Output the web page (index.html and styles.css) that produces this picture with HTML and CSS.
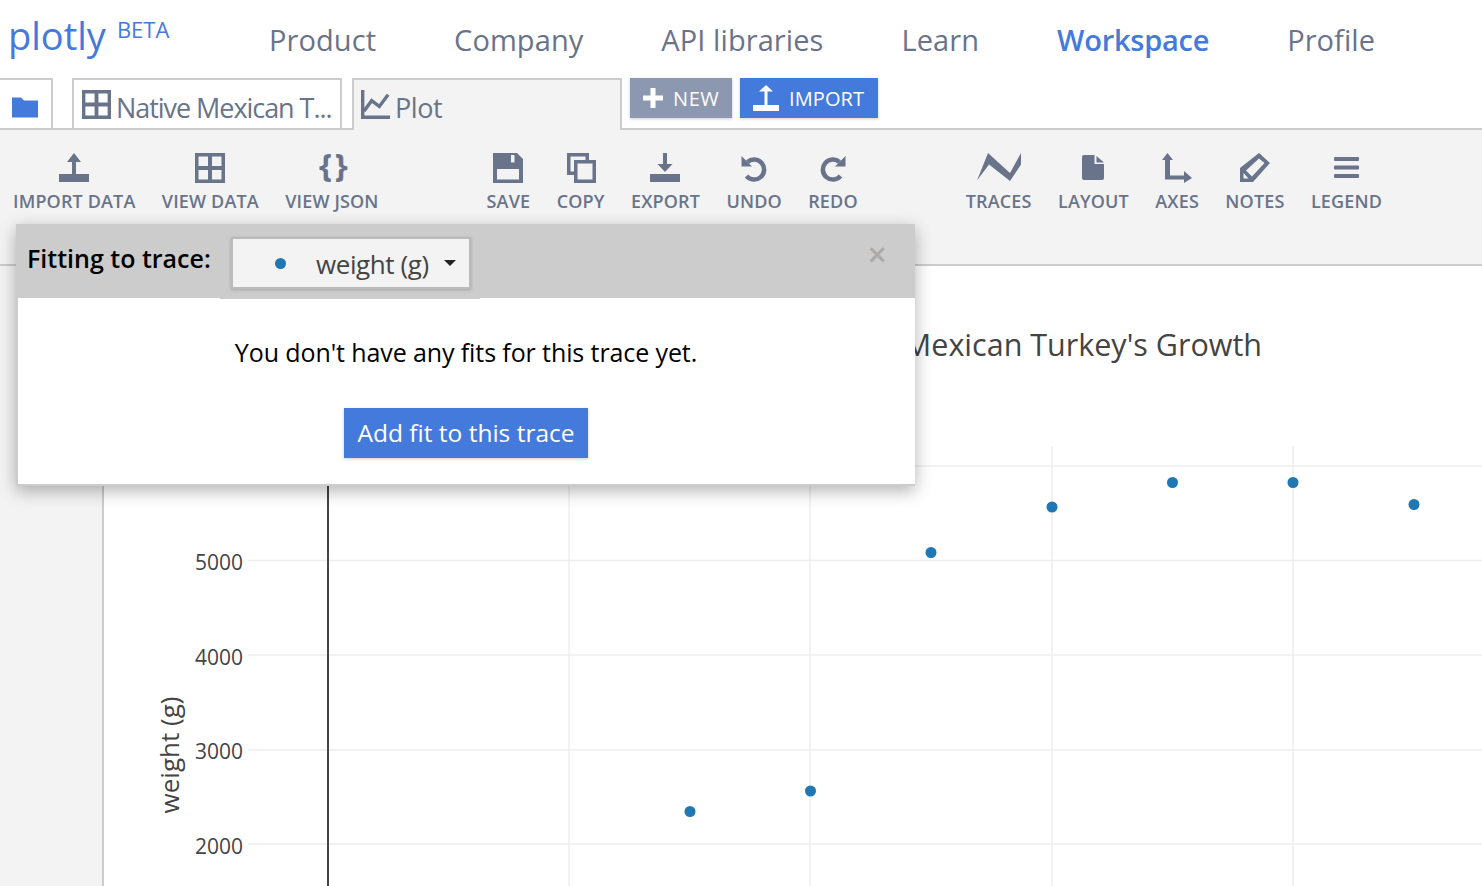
FILE: index.html
```html
<!DOCTYPE html>
<html lang="en">
<head>
<meta charset="utf-8">
<title>Plotly Workspace</title>
<link rel="stylesheet" href="styles.css">
</head>
<body>
<svg class="sprite" aria-hidden="true">
  <symbol id="i-import" viewBox="0 0 30 30"><path d="M0 21h30v8H0zM13 21V9H8L15 0l7 9h-5v12z"/></symbol>
  <symbol id="i-upload" viewBox="0 0 26 26"><path d="M0 20h26v6H0zM11.500 20V6.500H6L13 0l7 6.500h-5.500V20z"/></symbol>
  <symbol id="i-grid" viewBox="0 0 30 30"><path fill-rule="evenodd" d="M0 0h30v30H0zM3.500 3.500v9.500h9.500V3.500zM17 3.500v9.500h9.500V3.500zM3.500 17v9.500h9.500V17zM17 17v9.500h9.500V17z"/></symbol>
  <symbol id="i-chart" viewBox="0 0 30 30"><path d="M0 0h3.500v26.500H30V30H0z"/><path d="M3 22l8-11 8 6 9-12" fill="none" stroke="currentColor" stroke-width="3.500"/></symbol>
  <symbol id="i-save" viewBox="0 0 30 30"><path fill-rule="evenodd" d="M0 0h24l6 6v24H0zM4 16v10.500h22V16zM18 2v7.500h3.500V2z"/></symbol>
  <symbol id="i-copy" viewBox="0 0 30 30"><path fill-rule="evenodd" d="M1 0h22v7h7v23H8v-8H1zM4.500 3.500v15H8V7h11.500V3.500zM11.500 10.500v16h15v-16z"/></symbol>
  <symbol id="i-export" viewBox="0 0 30 30"><path d="M0 21h30v8H0zM13 0h4v11h5.500L15 19l-7.500-8H13z"/></symbol>
  <symbol id="i-undo" viewBox="0 0 26 26"><path d="M6.500 6a10 10 0 1 1-1 14" fill="none" stroke="currentColor" stroke-width="4.500"/><path d="M0.500 0v10.500H11z"/></symbol>
  <symbol id="i-redo" viewBox="0 0 26 26"><path d="M19.500 6a10 10 0 1 0 1 14" fill="none" stroke="currentColor" stroke-width="4.500"/><path d="M25.500 0v10.500H15z"/></symbol>
  <symbol id="i-traces" viewBox="0 0 44 28"><path d="M0 27.500L11 0l22 20L44 0v11.500L33 28 12 11.500z"/></symbol>
  <symbol id="i-layout" viewBox="0 0 22 25"><path d="M2 0h10.500v9H22v14a2 2 0 0 1-2 2H2a2 2 0 0 1-2-2V2a2 2 0 0 1 2-2zM14.500 1l7.500 6.500h-7.500z"/></symbol>
  <symbol id="i-axes" viewBox="0 0 30 30"><path d="M0 7L5.500 0 11 7H8v15.500h14V18l8 7-8 5v-3.500H3V7z"/></symbol>
  <symbol id="i-notes" viewBox="0 0 30 30"><path fill-rule="evenodd" d="M19 0l11 10-17 19H0V15zM19 5.500L6 17.500l6 6L24.500 10zM3.500 20v5.500h5z"/></symbol>
  <symbol id="i-legend" viewBox="0 0 25 21"><rect width="25" height="4" rx="1"/><rect y="8.500" width="25" height="4" rx="1"/><rect y="17" width="25" height="4" rx="1"/></symbol>
  <symbol id="i-plus" viewBox="0 0 20 20"><path d="M7.500 0h5v7.500H20v5h-7.500V20h-5v-7.500H0v-5h7.500z"/></symbol>
</svg>

<header class="nav">
  <a class="logo">plotly<sup class="beta">BETA</sup></a>
  <nav class="nav-links">
    <a>Product</a>
    <a>Company</a>
    <a>API libraries</a>
    <a>Learn</a>
    <a class="current">Workspace</a>
    <a>Profile</a>
  </nav>
</header>

<div class="tabs">
  <div class="tab folder">
    <svg class="folder-icon" viewBox="0 0 26 20"><path d="M0 0h9l3 3h14v17H0z"/></svg>
  </div>
  <div class="tab grid-tab">
    <svg class="tab-icon"><use href="#i-grid"/></svg><span>Native Mexican T...</span>
  </div>
  <div class="tab active">
    <svg class="tab-icon"><use href="#i-chart"/></svg><span>Plot</span>
  </div>
  <button class="btn new"><svg class="plus"><use href="#i-plus"/></svg>NEW</button>
  <button class="btn import"><svg class="up"><use href="#i-upload"/></svg>IMPORT</button>
</div>

<div class="toolbar">
  <div class="tool-group first">
    <div class="tool"><svg class="ic"><use href="#i-import"/></svg><span>IMPORT DATA</span></div>
    <div class="tool"><svg class="ic"><use href="#i-grid"/></svg><span>VIEW DATA</span></div>
    <div class="tool"><div class="ic braces">{ }</div><span>VIEW JSON</span></div>
  </div>
  <div class="tool-group">
    <div class="tool"><svg class="ic"><use href="#i-save"/></svg><span>SAVE</span></div>
    <div class="tool"><svg class="ic"><use href="#i-copy"/></svg><span>COPY</span></div>
    <div class="tool"><svg class="ic"><use href="#i-export"/></svg><span>EXPORT</span></div>
    <div class="tool"><svg class="ic ic-u"><use href="#i-undo"/></svg><span>UNDO</span></div>
    <div class="tool"><svg class="ic ic-u"><use href="#i-redo"/></svg><span>REDO</span></div>
  </div>
  <div class="tool-group">
    <div class="tool"><svg class="ic ic-t"><use href="#i-traces"/></svg><span>TRACES</span></div>
    <div class="tool"><svg class="ic ic-l"><use href="#i-layout"/></svg><span>LAYOUT</span></div>
    <div class="tool"><svg class="ic"><use href="#i-axes"/></svg><span>AXES</span></div>
    <div class="tool"><svg class="ic"><use href="#i-notes"/></svg><span>NOTES</span></div>
    <div class="tool"><svg class="ic ic-g"><use href="#i-legend"/></svg><span>LEGEND</span></div>
  </div>
</div>

<main class="main">
  <aside class="side"></aside>
  <section class="plot">
    <svg class="chart" viewBox="104 266 1378 620">
      <g class="grid">
        <path d="M248 466H1482M248 560.500H1482M248 655H1482M248 750H1482M248 844H1482"/>
        <path d="M569 446V886M810 446V886M1052 446V886M1293 446V886"/>
      </g>
      <path class="axis" d="M328 446V886"/>
      <text class="title" x="1262" y="356">Native Mexican Turkey's Growth</text>
      <g class="ticks">
        <text x="243" y="570">5000</text>
        <text x="243" y="665">4000</text>
        <text x="243" y="759">3000</text>
        <text x="243" y="854">2000</text>
      </g>
      <text class="ylabel" transform="translate(179 755) rotate(-90)">weight (g)</text>
      <g class="points">
        <circle cx="690" cy="811.500" r="5.500"/>
        <circle cx="810.500" cy="791" r="5.500"/>
        <circle cx="931" cy="552.500" r="5.500"/>
        <circle cx="1052" cy="507" r="5.500"/>
        <circle cx="1172.500" cy="482.500" r="5.500"/>
        <circle cx="1293" cy="482.500" r="5.500"/>
        <circle cx="1414" cy="504.500" r="5.500"/>
      </g>
    </svg>
  </section>
</main>

<div class="modal">
  <div class="modal-head">
    <span class="modal-label">Fitting to trace:</span>
    <div class="select-tab">
      <div class="select">
        <i class="dot"></i>
        <span class="select-text">weight (g)</span>
        <i class="caret"></i>
      </div>
    </div>
    <span class="close">×</span>
  </div>
  <div class="modal-body">
    <p>You don't have any fits for this trace yet.</p>
    <button class="add">Add fit to this trace</button>
  </div>
</div>
</body>
</html>
```

FILE: styles.css
```css
* { box-sizing: border-box; }
html, body { margin: 0; height: 100%; }
body {
  position: relative;
  display: flex;
  flex-direction: column;
  height: 886px;
  overflow: hidden;
  background: #fff;
  font-family: "Open Sans", "Liberation Sans", sans-serif;
  color: #69738a;
}
.sprite { display: none; }
svg { fill: currentColor; }

.nav { display: flex; height: 78px; flex: none; align-items: flex-start; }
.logo { margin: 9px 0 0 8px; width: 261px; font-size: 38px; line-height: 52px; color: #447adb; }
.beta { margin-left: 11px; font-size: 22px; line-height: 0; vertical-align: 12px; }
.nav-links { display: flex; gap: 78px; margin-top: 20px; font-size: 29px; line-height: 40px; letter-spacing: 0.08px; }
.current { color: #447adb; font-weight: 600; letter-spacing: -0.25px; }

.tabs { display: flex; flex: none; height: 52px; border-bottom: 2px solid #ccc; align-items: flex-start; }
.tab {
  display: flex;
  align-items: center;
  height: 50px;
  border: 2px solid #ccc;
  border-bottom: 0;
  background: #fff;
  font-size: 27px;
  letter-spacing: -0.4px;
  white-space: nowrap;
}
.folder { width: 53px; border-left: 0; padding-left: 12px; color: #447adb; }
.folder-icon { width: 26px; height: 21px; margin-top: 6px; }
.grid-tab { width: 270px; margin-left: 19px; padding-left: 8px; align-items: flex-start; padding-top: 10px; letter-spacing: -1.05px; }
.active { width: 270px; height: 52px; margin-left: 10px; padding-left: 7px; background: #f3f3f3; align-items: flex-start; padding-top: 10px; }
.tab-icon { width: 29px; height: 29px; margin-right: 5px; flex: none; }
.tab span { line-height: 36px; }
.btn {
  display: flex;
  align-items: center;
  height: 40px;
  border: 0;
  color: #fff;
  font: inherit;
  font-size: 20px;
  letter-spacing: 0.6px;
  box-shadow: 0 1px 3px rgba(0,0,0,.2);
}
.new { width: 102px; margin-left: 8px; padding-left: 13px; background: #8c97b0; }
.import { width: 138px; margin-left: 8px; padding-left: 13px; background: #447adb; letter-spacing: 0.1px; }
.plus { width: 20px; height: 20px; margin-right: 10px; }
.up { width: 26px; height: 26px; margin-right: 10px; }

.toolbar { display: flex; flex: none; height: 136px; padding: 23px 0 0 13px; gap: 108px; background: #f3f3f3; border-bottom: 2px solid #ccc; }
.tool-group { display: flex; gap: 26.400px; }
.tool { display: flex; flex-direction: column; align-items: center; font-size: 18px; font-weight: 600; letter-spacing: 0.15px; white-space: nowrap; }
.ic { width: 30px; height: 30px; flex: none; }
.ic-u { width: 26px; height: 26px; margin: 3px 0 1px; }
.ic-t { width: 44px; height: 28px; margin-bottom: 2px; }
.ic-l { width: 22px; height: 25px; margin: 2px 0 3px; }
.ic-g { width: 25px; height: 21px; margin: 4px 0 5px; }
.tool span { margin-top: 6px; line-height: 24px; }
.braces { display: flex; justify-content: center; font-size: 33px; font-weight: 700; line-height: 24px; letter-spacing: -3px; white-space: nowrap; }

.main { display: flex; flex: 1; min-height: 0; }
.side { width: 102px; flex: none; background: #f3f3f3; }
.plot { flex: 1; border-left: 2px solid #ccc; background: #fff; min-width: 0; }
.chart { display: block; width: 1378px; height: 620px; }
.grid path { fill: none; stroke: #eeeeee; stroke-width: 1.500; }
.axis { fill: none; stroke: #444; stroke-width: 2; }
.title { font-size: 30.500px; fill: #444; text-anchor: end; }
.ticks text { font-size: 21px; fill: #444; text-anchor: end; }
.ylabel { font-size: 26px; fill: #444; text-anchor: middle; }
.points circle { fill: #1f77b4; }

.modal { position: absolute; left: 16px; top: 224px; width: 899px; height: 262px; background: #fff; border-left: 2px solid #ccc; border-bottom: 2px solid #ccc; box-shadow: 0 5px 16px rgba(0,0,0,.3); }
.modal-head { position: relative; display: flex; height: 74px; background: #ccc; color: #000; }
.modal-label { margin: 17px 0 0 9px; font-size: 25px; font-weight: 600; line-height: 34px; }
.select-tab { position: absolute; left: 202px; top: 0; width: 260px; height: 75px; padding: 13px 11px 0; background: #ccc; }
.select {
  display: flex;
  align-items: center;
  width: 240px;
  height: 52px;
  padding-left: 42px;
  background: #f3f3f3;
  border: 2px solid #bbb;
  color: #444;
  font-size: 26px;
  letter-spacing: -0.4px;
  box-shadow: 0 1px 3px rgba(0,0,0,.2);
}
.select-text { padding-top: 2px; }
.dot { width: 11px; height: 11px; margin-right: 30px; border-radius: 50%; background: #1f77b4; }
.caret { margin-left: 15px; border: 6px solid transparent; border-top-color: #222; border-bottom: 0; }
.close { position: absolute; right: 28px; top: 10px; font-size: 34px; line-height: 40px; font-weight: 600; color: #aaa; }
.modal-body { display: flex; flex-direction: column; align-items: center; padding: 36px 1px 0 0; color: #000; }
.modal-body p { margin: 0; font-size: 25px; line-height: 36px; letter-spacing: -0.1px; }
.add { width: 244px; height: 50px; margin-top: 38px; border: 0; padding: 0 0 2px; background: #447adb; color: #fff; font: inherit; font-size: 24.500px; box-shadow: 0 1px 3px rgba(0,0,0,.2); }
```
